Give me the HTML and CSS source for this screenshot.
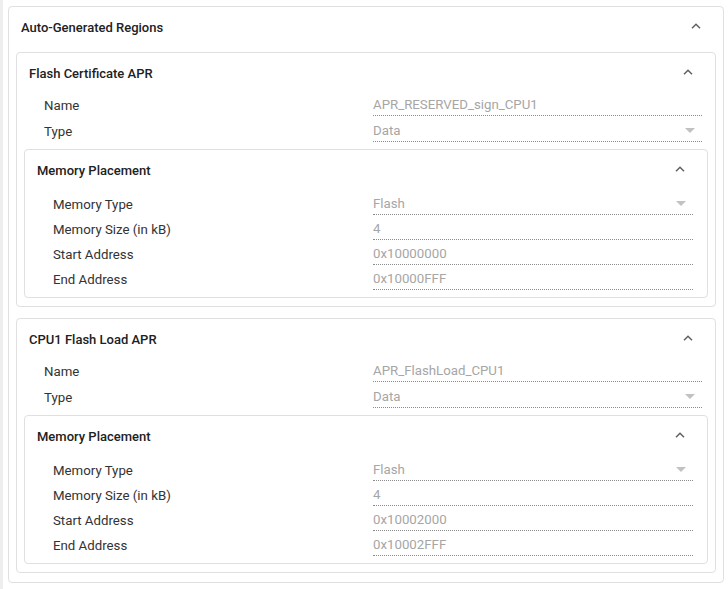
FILE: index.html
```html
<!DOCTYPE html>
<html>
<head>
<meta charset="utf-8">
<link rel="stylesheet" href="styles.css">
</head>
<body>
<div class="page">
  <section class="card outer">
    <div class="card-head">
      <span class="card-title">Auto-Generated Regions</span>
      <svg class="chev" width="10" height="6" viewBox="0 0 10 6"><polyline points="1,5.2 5,1.2 9,5.2" /></svg>
    </div>

    <section class="card region">
      <div class="card-head">
        <span class="card-title">Flash Certificate APR</span>
        <svg class="chev" width="10" height="6" viewBox="0 0 10 6"><polyline points="1,5.2 5,1.2 9,5.2" /></svg>
      </div>
      <div class="fields">
        <div class="label">Name</div>
        <div class="value">APR_RESERVED_sign_CPU1</div>
        <div class="label">Type</div>
        <div class="value select">Data<span class="caret"></span></div>
      </div>
      <section class="card mem">
        <div class="card-head">
          <span class="card-title">Memory Placement</span>
          <svg class="chev" width="10" height="6" viewBox="0 0 10 6"><polyline points="1,5.2 5,1.2 9,5.2" /></svg>
        </div>
        <div class="fields">
          <div class="label">Memory Type</div>
          <div class="value select">Flash<span class="caret"></span></div>
          <div class="label">Memory Size (in kB)</div>
          <div class="value">4</div>
          <div class="label">Start Address</div>
          <div class="value">0x10000000</div>
          <div class="label">End Address</div>
          <div class="value">0x10000FFF</div>
        </div>
      </section>
    </section>

    <section class="card region second">
      <div class="card-head">
        <span class="card-title">CPU1 Flash Load APR</span>
        <svg class="chev" width="10" height="6" viewBox="0 0 10 6"><polyline points="1,5.2 5,1.2 9,5.2" /></svg>
      </div>
      <div class="fields">
        <div class="label">Name</div>
        <div class="value">APR_FlashLoad_CPU1</div>
        <div class="label">Type</div>
        <div class="value select">Data<span class="caret"></span></div>
      </div>
      <section class="card mem">
        <div class="card-head">
          <span class="card-title">Memory Placement</span>
          <svg class="chev" width="10" height="6" viewBox="0 0 10 6"><polyline points="1,5.2 5,1.2 9,5.2" /></svg>
        </div>
        <div class="fields">
          <div class="label">Memory Type</div>
          <div class="value select">Flash<span class="caret"></span></div>
          <div class="label">Memory Size (in kB)</div>
          <div class="value">4</div>
          <div class="label">Start Address</div>
          <div class="value">0x10002000</div>
          <div class="label">End Address</div>
          <div class="value">0x10002FFF</div>
        </div>
      </section>
    </section>
  </section>
</div>
</body>
</html>
```

FILE: styles.css
```css
* { box-sizing: border-box; }

html, body {
  margin: 0;
  background: #ffffff;
}

body {
  font-family: Roboto, "Liberation Sans", Arial, sans-serif;
  font-size: 13px;
  color: #333333;
}

.page {
  border-left: 3px solid #eeeeee;
  padding: 6px 4px 7px 5px;
  min-height: 589px;
}

.card {
  border: 1px solid #e0e0e0;
  border-radius: 4px;
  background: #ffffff;
  padding: 0 7px 8px 7px;
}

.outer {
  padding-bottom: 9px;
}

.region {
  margin-top: 5px;
}

.region.second {
  margin-top: 11px;
}

.mem {
  margin-top: 5px;
  padding-bottom: 5px;
}

.card-head {
  height: 40px;
  display: flex;
  align-items: center;
  justify-content: space-between;
  padding: 0 15px 0 5px;
}

.card-title {
  font-weight: 500;
  color: #212121;
  font-size: 13px;
}

.chev {
  margin-top: -3px;
}

.chev polyline {
  fill: none;
  stroke: #616161;
  stroke-width: 1.5;
}

.fields {
  display: grid;
  grid-template-columns: 1fr 1fr;
  grid-auto-rows: 25.5px;
  padding: 0 6px 0 20px;
  font-size: 13.25px;
}

.mem .fields {
  grid-auto-rows: 25px;
  padding: 2px 7px 0 21px;
}

.label {
  display: flex;
  align-items: center;
  color: #333333;
}

.value {
  display: flex;
  align-items: center;
  justify-content: space-between;
  color: #a6a6a6;
  border-bottom: 1px dotted #8a8a8a;
  height: 23px;
  padding-top: 1px;
}

.caret {
  width: 0;
  height: 0;
  border-left: 5px solid transparent;
  border-right: 5px solid transparent;
  border-top: 5px solid #c2c2c2;
  margin-right: 7px;
}
```
